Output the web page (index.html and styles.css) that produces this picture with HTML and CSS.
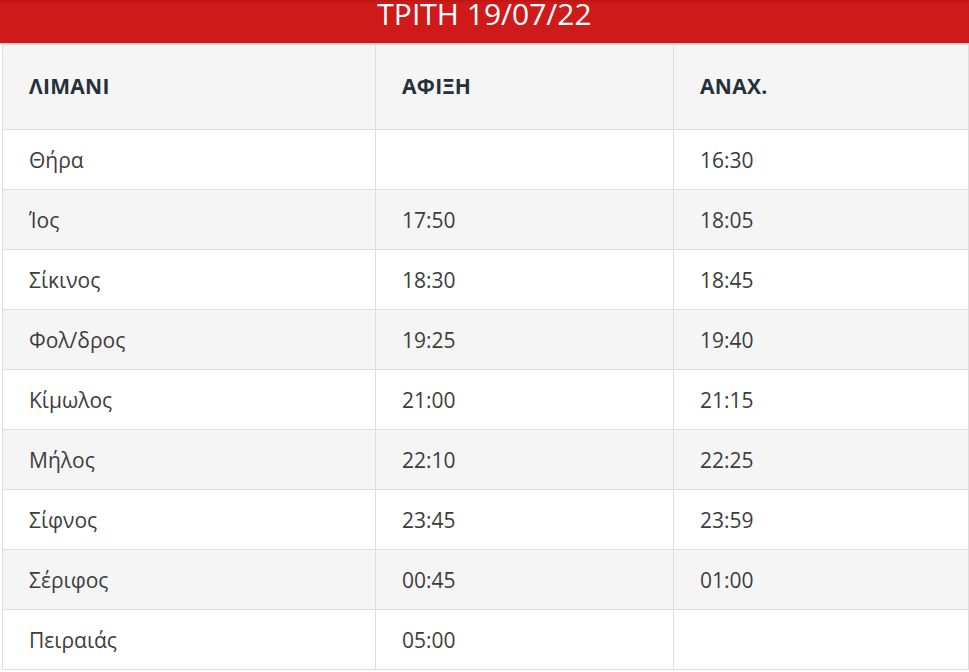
FILE: index.html
```html
<!DOCTYPE html>
<html lang="el">
<head>
<meta charset="utf-8">
<link rel="stylesheet" href="styles.css">
</head>
<body>
<div class="wrap">
  <div class="title">ΤΡΙΤΗ 19/07/22</div>
  <table class="sched">
    <colgroup><col class="c1"><col class="c2"><col class="c3"></colgroup>
    <thead>
      <tr><th>ΛΙΜΑΝΙ</th><th>ΑΦΙΞΗ</th><th>ΑΝΑΧ.</th></tr>
    </thead>
    <tbody>
      <tr><td>Θήρα</td><td></td><td>16:30</td></tr>
      <tr><td>Ίος</td><td>17:50</td><td>18:05</td></tr>
      <tr><td>Σίκινος</td><td>18:30</td><td>18:45</td></tr>
      <tr><td>Φολ/δρος</td><td>19:25</td><td>19:40</td></tr>
      <tr><td>Κίμωλος</td><td>21:00</td><td>21:15</td></tr>
      <tr><td>Μήλος</td><td>22:10</td><td>22:25</td></tr>
      <tr><td>Σίφνος</td><td>23:45</td><td>23:59</td></tr>
      <tr><td>Σέριφος</td><td>00:45</td><td>01:00</td></tr>
      <tr><td>Πειραιάς</td><td>05:00</td><td></td></tr>
    </tbody>
  </table>
</div>
</body>
</html>
```
FILE: styles.css
```css
html, body { margin: 0; padding: 0; background: #fff; }
body { font-family: "Open Sans", "Noto Sans", sans-serif; color: #333; }
.wrap { width: 969px; }
.title {
  height: 43px;
  background: #cf1a1a;
  color: #fff;
  font-size: 30px;
  line-height: 27px;
  text-align: center;
  overflow: hidden;
  border-bottom: 1px solid #f3c4c4;
  box-shadow: inset 0 3px 3px -2px rgba(0,0,0,0.15);
}
.sched {
  margin-left: 2px;
  width: 966px;
  border-collapse: collapse;
  border: 1px solid #ddd;
  table-layout: fixed;
}
.c1 { width: 373px; }
.c2 { width: 298px; }
.c3 { width: 295px; }
.sched th, .sched td {
  border: 1px solid #ddd;
  text-align: left;
  padding: 0 0 0 26px;
}
.sched th {
  height: 81px;
  background: #f5f5f5;
  font-weight: 700;
  font-size: 21px;
  color: #25303a;
  letter-spacing: 0.3px;
  padding-bottom: 3px;
}
.sched td {
  height: 59px;
  font-size: 21px;
  color: #3d3d3d;
}
.sched tbody tr:nth-child(even) td { background: #f5f5f5; }
```
